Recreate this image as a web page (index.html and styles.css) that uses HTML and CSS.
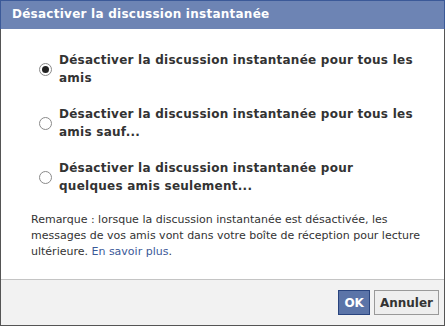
FILE: index.html
```html
<!DOCTYPE html>
<html>
<head>
<meta charset="utf-8">
<link rel="stylesheet" href="styles.css">
</head>
<body>
<div class="dialog">
  <div class="header">Désactiver la discussion instantanée</div>
  <div class="content">
    <div class="options">
      <label class="option"><span class="radio checked"></span><span class="label">Désactiver la discussion instantanée pour tous les amis</span></label>
      <label class="option"><span class="radio"></span><span class="label">Désactiver la discussion instantanée pour tous les amis sauf...</span></label>
      <label class="option"><span class="radio"></span><span class="label">Désactiver la discussion instantanée pour quelques amis seulement...</span></label>
    </div>
    <p class="note">Remarque : lorsque la discussion instantanée est désactivée, les messages de vos amis vont dans votre boîte de réception pour lecture ultérieure. <a class="link">En savoir plus</a>.</p>
  </div>
  <div class="footer">
    <button class="btn primary">OK</button>
    <button class="btn">Annuler</button>
  </div>
</div>
</body>
</html>
```
FILE: styles.css
```css
* { box-sizing: border-box; }
html, body { margin: 0; padding: 0; background: #fff; }
.dialog {
  width: 445px;
  height: 326px;
  display: flex;
  flex-direction: column;
  border: 1px solid #555;
  border-top: none;
  font-family: "DejaVu Sans", Tahoma, sans-serif;
}
.header {
  flex: none;
  height: 29px;
  margin: 0 -1px;
  background: #6d84b4;
  border: 1px solid #3b5998;
  border-bottom: none;
  color: #fff;
  font-weight: bold;
  font-size: 12px;
  letter-spacing: 0.25px;
  line-height: 27px;
  padding-left: 11px;
}
.content {
  flex: 1;
  padding: 22px 6px 0 30px;
  color: #333;
}
.options {
  display: flex;
  flex-direction: column;
  gap: 18px;
  padding-left: 8px;
}
.option {
  display: flex;
  align-items: center;
  gap: 7px;
}
.radio {
  flex: none;
  width: 13px;
  height: 13px;
  border-radius: 50%;
  border: 1px solid #8a8a8a;
  background: #fff;
  position: relative;
}
.radio.checked::after {
  content: "";
  position: absolute;
  left: 2px; top: 2px;
  width: 7px; height: 7px;
  border-radius: 50%;
  background: #222;
}
.label {
  font-weight: bold;
  font-size: 12px;
  letter-spacing: 0.25px;
  line-height: 18px;
  color: #333;
  width: 356px;
}
.note {
  margin: 17px 0 0 0;
  font-size: 11px;
  line-height: 16px;
  color: #333;
  max-width: 407px;
}
.link { color: #3b5998; }
.footer {
  flex: none;
  height: 46px;
  background: #f2f2f2;
  border-top: 1px solid #c4c4c4;
  display: flex;
  justify-content: flex-end;
  align-items: center;
  gap: 4px;
  padding-right: 5px;
}
.btn {
  font-family: "DejaVu Sans", Tahoma, sans-serif;
  font-weight: bold;
  font-size: 12px;
  height: 25px;
  padding: 0 5px;
  border: 1px solid #999;
  background: #eee;
  color: #333;
}
.btn.primary {
  background: #5b74a8;
  border-color: #29447e;
  color: #fff;
}
```
